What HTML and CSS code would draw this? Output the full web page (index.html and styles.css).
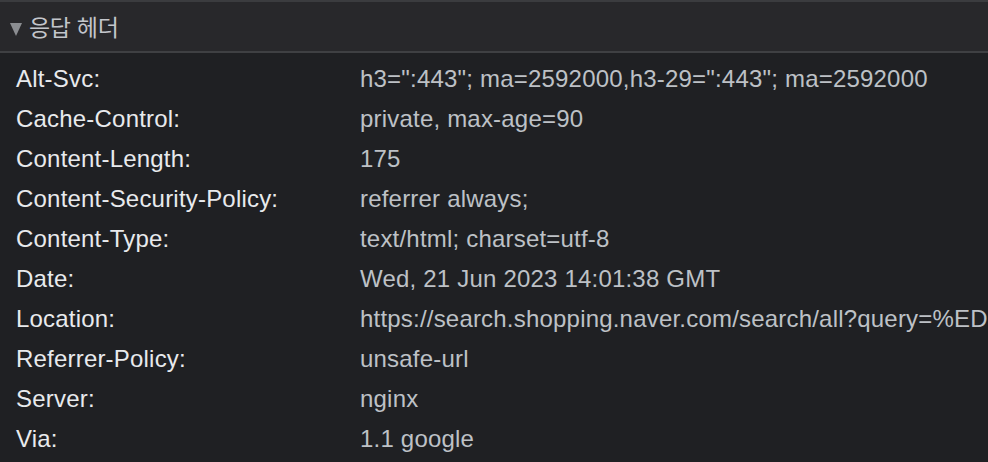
FILE: index.html
```html
<!DOCTYPE html>
<html lang="ko">
<head>
<meta charset="utf-8">
<link rel="stylesheet" href="styles.css">
</head>
<body>
<div class="panel">
  <div class="section-header">
    <span class="triangle"></span>
    <span class="title">응답 헤더</span>
  </div>
  <div class="rows">
    <div class="row"><span class="key">Alt-Svc:</span><span class="val">h3=":443"; ma=2592000,h3-29=":443"; ma=2592000</span></div>
    <div class="row"><span class="key">Cache-Control:</span><span class="val">private, max-age=90</span></div>
    <div class="row"><span class="key">Content-Length:</span><span class="val">175</span></div>
    <div class="row"><span class="key">Content-Security-Policy:</span><span class="val">referrer always;</span></div>
    <div class="row"><span class="key">Content-Type:</span><span class="val">text/html; charset=utf-8</span></div>
    <div class="row"><span class="key">Date:</span><span class="val">Wed, 21 Jun 2023 14:01:38 GMT</span></div>
    <div class="row"><span class="key">Location:</span><span class="val">https://search.shopping.naver.com/search/all?query=%ED</span></div>
    <div class="row"><span class="key">Referrer-Policy:</span><span class="val">unsafe-url</span></div>
    <div class="row"><span class="key">Server:</span><span class="val">nginx</span></div>
    <div class="row"><span class="key">Via:</span><span class="val">1.1 google</span></div>
  </div>
</div>
</body>
</html>
```
FILE: styles.css
```css
html, body {
  margin: 0;
  padding: 0;
  background: #1f2023;
}
body {
  width: 988px;
  height: 462px;
  overflow: hidden;
  font-family: "Liberation Sans", Arial, "Noto Sans CJK KR", sans-serif;
}
.panel {
  border-top: 2px solid #3b3c3f;
}
.section-header {
  height: 49px;
  background: #28282b;
  border-bottom: 2px solid #3f4043;
  display: flex;
  align-items: center;
  padding-left: 10px;
  gap: 7px;
}
.triangle {
  width: 0;
  height: 0;
  border-left: 6px solid transparent;
  border-right: 6px solid transparent;
  border-top: 13px solid #8b8d91;
  margin-top: 6px;
}
.title {
  color: #c3c6cb;
  font-size: 23px;
  letter-spacing: -0.3px;
  font-family: "Noto Sans CJK KR", sans-serif;
  line-height: 1;
}
.rows {
  padding-top: 6px;
}
.row {
  height: 40px;
  display: flex;
  align-items: center;
  font-size: 24px;
  letter-spacing: 0.2px;
  white-space: nowrap;
}
.key {
  width: 344px;
  padding-left: 16px;
  flex: none;
  color: #e8eaed;
}
.val {
  color: #bdc1c6;
}
```
